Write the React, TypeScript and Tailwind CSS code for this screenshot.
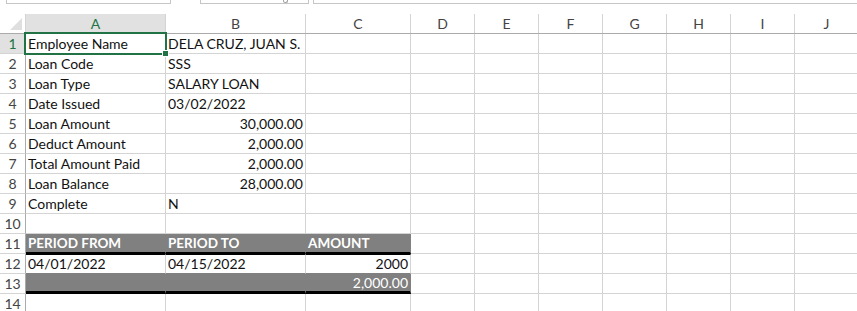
import React from 'react'

const COLS = ['A', 'B', 'C', 'D', 'E', 'F', 'G', 'H', 'I', 'J']

type Cell = { text?: string; right?: boolean }

const ROWS: Cell[][] = [
  [{ text: 'Employee Name' }, { text: 'DELA CRUZ, JUAN S.' }],
  [{ text: 'Loan Code' }, { text: 'SSS' }],
  [{ text: 'Loan Type' }, { text: 'SALARY LOAN' }],
  [{ text: 'Date Issued' }, { text: '03/02/2022' }],
  [{ text: 'Loan Amount' }, { text: '30,000.00', right: true }],
  [{ text: 'Deduct Amount' }, { text: '2,000.00', right: true }],
  [{ text: 'Total Amount Paid' }, { text: '2,000.00', right: true }],
  [{ text: 'Loan Balance' }, { text: '28,000.00', right: true }],
  [{ text: 'Complete' }, { text: 'N' }],
  [],
  [{ text: 'PERIOD FROM' }, { text: 'PERIOD TO' }, { text: 'AMOUNT' }],
  [{ text: '04/01/2022' }, { text: '04/15/2022' }, { text: '2000', right: true }],
  [{}, {}, { text: '2,000.00', right: true }],
  [],
]

const grid = 'grid grid-cols-[26px_140px_140px_105px_64px_64px_64px_64px_64px_64px_64px]'

function cellClass(row: number, col: number) {
  // rows are 1-based, cols 0..9 (A..J)
  const inTable = col <= 2
  if (row === 11 && inTable)
    return 'bg-[#808080] text-white font-bold text-[13.5px] border-r border-r-[#808080] border-b-2 border-b-black h-[20px]'
  if (row === 12 && inTable)
    return 'border-t border-t-black border-r border-r-[#d4d4d4] border-b border-b-[#808080] h-[20px] leading-[18px]'
  if (row === 13 && inTable)
    return 'bg-[#808080] text-white border-r border-r-[#808080] border-b-[3px] border-b-black h-[20px] leading-[17px]'
  return 'border-r border-b border-[#d4d4d4] h-[20px]'
}

export default function App() {
  return (
    <div
      className="relative w-[857px] h-[311px] overflow-hidden bg-white text-[#111]"
      style={{ fontFamily: 'Lato, "Open Sans", sans-serif' }}
    >
      {/* Top boxes (name box / formula bar edges) */}
      <div className="flex h-[14px] items-start">
        <div className="ml-[6px] w-[165px] h-[4px] border border-t-0 border-[#c6c6c6]" />
        <div className="ml-[29px] w-[109px] h-[4px] border border-t-0 border-[#c6c6c6] relative">
          <div className="absolute right-[20px] top-0 w-[5px] h-[3px] rounded-b-full border border-t-0 border-[#a0a0a0]" />
        </div>
        <div className="ml-[4px] flex-1 h-[4px] border border-t-0 border-r-0 border-[#c6c6c6]" />
      </div>

      {/* Column headers */}
      <div className={`${grid} h-[20px] border-b border-[#ababab] text-[14px] leading-[19px] text-[#444]`}>
        <div className="relative border-r border-[#d4d4d4]">
          <svg className="absolute right-[3px] bottom-[3px]" width="12" height="12" viewBox="0 0 12 12">
            <polygon points="12,0 12,12 0,12" fill="#dfdfdf" />
          </svg>
        </div>
        {COLS.map((c, i) => (
          <div
            key={c}
            className={
              i === 0
                ? 'bg-[#e1e1e1] text-[#217346] text-center border-r border-[#d4d4d4]'
                : 'text-center border-r border-[#d4d4d4]'
            }
          >
            {c}
          </div>
        ))}
      </div>

      {/* Rows */}
      {ROWS.map((cells, r) => {
        const row = r + 1
        return (
          <div key={row} className={`${grid} text-[14px] leading-[19px]`}>
            <div
              className={
                row === 1
                  ? 'h-[20px] bg-[#e1e1e1] text-[#217346] text-center border-r border-r-[#ababab] border-b border-b-[#d4d4d4]'
                  : 'h-[20px] text-[#444] text-center border-r border-r-[#ababab] border-b border-b-[#d4d4d4]'
              }
            >
              {row}
            </div>
            {COLS.map((_, c) => {
              const cell = cells[c]
              return (
                <div
                  key={c}
                  className={`${cellClass(row, c)} whitespace-nowrap overflow-visible ${
                    cell?.right ? 'text-right pr-[2px]' : 'pl-[2px]'
                  }`}
                >
                  {cell?.text}
                </div>
              )
            })}
          </div>
        )
      })}

      {/* Active cell selection on A1 */}
      <div className="absolute left-[24px] top-[32px] w-[143px] h-[23px] border-2 border-[#217346] pointer-events-none" />
      <div className="absolute left-[162px] top-[50px] w-[7px] h-[7px] bg-[#217346] border border-white pointer-events-none" />
    </div>
  )
}
